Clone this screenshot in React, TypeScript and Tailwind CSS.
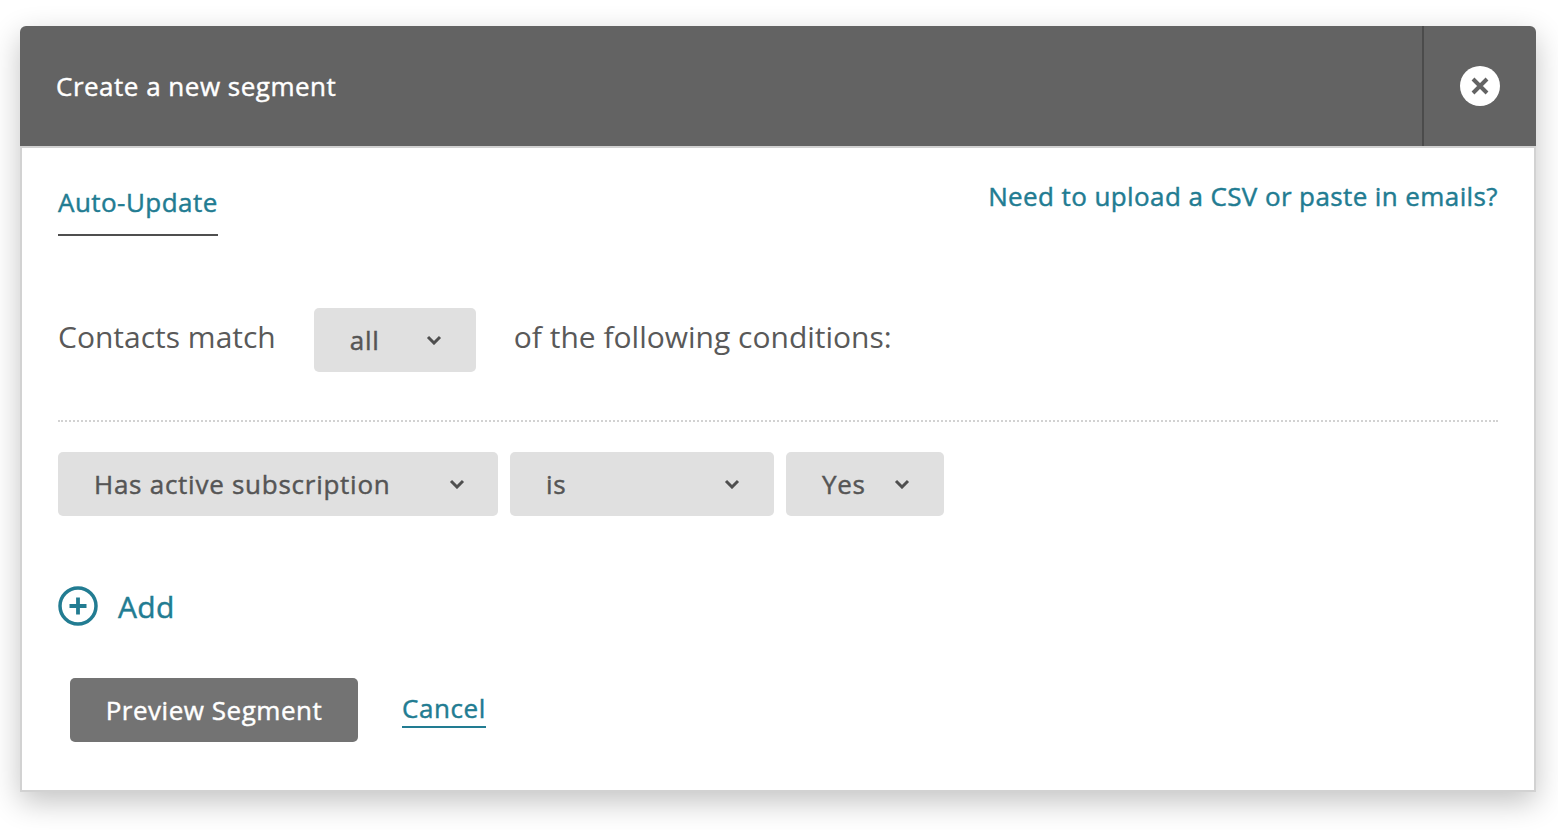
import React from "react";

function Chevron() {
  return (
    <svg width="16" height="10" viewBox="0 0 16 10" fill="none" className="shrink-0">
      <path d="M2 2 L8 8 L14 2" stroke="#4f4f4f" strokeWidth="3" />
    </svg>
  );
}

function Select({ label, className }: { label: string; className: string }) {
  return (
    <div className={`h-16 rounded-[5px] bg-[#e0e0e0] flex items-center justify-between pl-9 text-[26px] tracking-[0.74px] [-webkit-text-stroke:0.45px] text-[#555555] ${className}`}>
      <span>{label}</span>
      <Chevron />
    </div>
  );
}

export default function App() {
  return (
    <div className="min-h-[830px] bg-white pt-[26px] px-5 font-['Open_Sans',sans-serif] overflow-hidden">
      <div className="w-[1516px] h-[766px] rounded-t-[6px] flex flex-col shadow-[0_10px_30px_rgba(0,0,0,0.24)]">
        <div className="h-[120px] bg-[#636363] rounded-t-[6px] flex shrink-0">
          <div className="flex-1 pl-[36px] flex items-center text-[26px] tracking-[0.5px] [-webkit-text-stroke:0.45px] text-white border-r-2 border-[#4b4b4b]">
            Create a new segment
          </div>
          <div className="w-[112px] flex items-center justify-center">
            <div className="w-10 h-10 rounded-full bg-white flex items-center justify-center">
              <svg width="20" height="20" viewBox="0 0 20 20" fill="none">
                <path d="M3 3 L17 17 M17 3 L3 17" stroke="#636363" strokeWidth="4" />
              </svg>
            </div>
          </div>
        </div>
        <div className="flex-1 bg-white border-2 border-[#d2d2d2] pl-9 pr-9 flex flex-col">
          <div className="flex justify-between items-start">
            <div className="mt-[22px] h-[66px] border-b-2 border-[#4f4f4f] text-[26px] tracking-[0.45px] [-webkit-text-stroke:0.45px] text-[#227c92] leading-[64px]">
              Auto-Update
            </div>
            <div className="mt-4 text-[26px] tracking-[0.4px] [-webkit-text-stroke:0.45px] leading-[64px] h-[66px] text-[#227c92]">
              Need to upload a CSV or paste in emails?
            </div>
          </div>
          <div className="mt-[72px] flex items-center text-[30px] text-[#595959]">
            <span className="-mt-2">Contacts match</span>
            <Select label="all" className="w-[162px] ml-[38px] mr-[38px] pr-[34px]" />
            <span className="-mt-2">of the following conditions:</span>
          </div>
          <div className="mt-[48px] border-t-2 border-dotted border-[#d2d2d2]"></div>
          <div className="mt-[30px] flex gap-3">
            <Select label="Has active subscription" className="w-[440px] pr-[33px]" />
            <Select label="is" className="w-[264px] pr-[34px]" />
            <Select label="Yes" className="w-[158px] pr-[34px]" />
          </div>
          <div className="mt-[68px] flex items-center gap-5 text-[30px] tracking-[0.3px] [-webkit-text-stroke:0.45px] text-[#227c92]">
            <svg width="40" height="40" viewBox="0 0 40 40" fill="none" className="-mt-[2px]">
              <circle cx="20" cy="20" r="18" stroke="#227c92" strokeWidth="3.5" />
              <path d="M20 11.5 V28.5 M11.5 20 H28.5" stroke="#227c92" strokeWidth="3.8" />
            </svg>
            <span>Add</span>
          </div>
          <div className="mt-[49px] ml-3 flex items-center">
            <div className="h-16 w-[288px] rounded-[5px] bg-[#737373] text-white text-[26px] tracking-[0.53px] [-webkit-text-stroke:0.45px] flex items-center justify-center">
              Preview Segment
            </div>
            <span className="ml-[44px] -mt-[2px] text-[26px] tracking-[0.6px] [-webkit-text-stroke:0.45px] text-[#227c92] border-b-2 border-[#227c92] leading-[36px]">
              Cancel
            </span>
          </div>
        </div>
      </div>
    </div>
  );
}
